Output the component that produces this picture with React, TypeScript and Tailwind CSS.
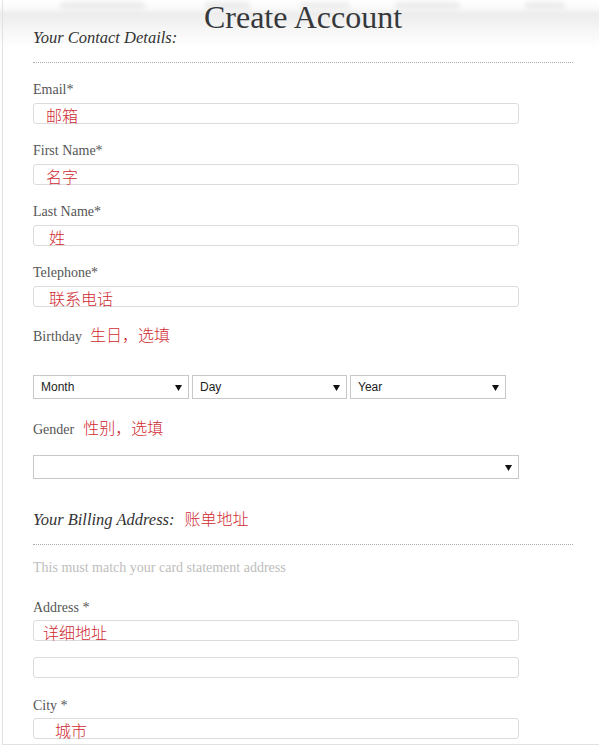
const RED = 'text-[#d02a31]';

function TextField({ label, note, noteLeft }: { label: string; note?: string; noteLeft?: string }) {
  return (
    <div className="mb-[19px]">
      <div className="h-[16px] leading-[16px] text-[14px] text-[#555] mb-[5px]">{label}</div>
      <div className="relative h-[21px] w-[486px] rounded-[3px] border border-[#dcdcdc] bg-white">
        {note && (
          <span
            className={`absolute top-[3px] ${noteLeft} ${RED} text-[16px] leading-[16px] font-['Noto_Sans_CJK_SC',sans-serif] font-light whitespace-nowrap`}
          >
            {note}
          </span>
        )}
      </div>
    </div>
  );
}

function FakeSelect({ label, width }: { label?: string; width: string }) {
  return (
    <div className={`${width} h-[24px] border border-[#c8c8c8] bg-white flex items-center justify-between pl-[7px] pr-[6px]`}>
      <span className="text-[12px] text-[#222] font-['Liberation_Sans',Arial,sans-serif]">{label}</span>
      <svg width="7" height="7" viewBox="0 0 7 7" className="ml-auto">
        <path d="M0 1h7L3.5 7z" fill="#111" />
      </svg>
    </div>
  );
}

export default function App() {
  return (
    <div className="relative w-[599px] h-[746px] overflow-hidden bg-white font-['Liberation_Serif','Times_New_Roman',serif]">
      {/* faded banner behind the title */}
      <div className="pointer-events-none absolute inset-x-0 top-0 h-[48px] bg-[linear-gradient(to_bottom,#ffffff_0px,#fafafa_8px,#ededed_14px,#f6f6f6_30px,#ffffff_48px)] overflow-hidden">
        <div className="absolute top-[2px] left-[60px] h-[8px] w-[85px] rounded-full bg-[#ececec] blur-[2px]" />
        <div className="absolute top-[2px] left-[205px] h-[8px] w-[45px] rounded-full bg-[#ececec] blur-[2px]" />
        <div className="absolute top-[2px] left-[300px] h-[8px] w-[50px] rounded-full bg-[#eeeeee] blur-[2px]" />
        <div className="absolute top-[2px] left-[395px] h-[8px] w-[65px] rounded-full bg-[#ececec] blur-[2px]" />
        <div className="absolute top-[2px] left-[525px] h-[8px] w-[40px] rounded-full bg-[#ececec] blur-[2px]" />
      </div>

      <div className="relative ml-[2px] h-[745px] border-l border-b border-[#e2e2e2] pl-[30px] pr-[26px]">
        <h1 className="h-[28px] pt-[1px] text-center text-[32px] leading-[32px] text-[#36383c] font-normal whitespace-nowrap">
          Create Account
        </h1>
        <div className="h-[20px] leading-[20px] text-[16.5px] italic text-[#333]">Your Contact Details:</div>
        <div className="mt-[14px] mb-[19px] border-t border-dotted border-[#a9a9a9]" />

        <TextField label="Email*" note="邮箱" noteLeft="left-[12px]" />
        <TextField label="First Name*" note="名字" noteLeft="left-[12px]" />
        <TextField label="Last Name*" note="姓" noteLeft="left-[15px]" />
        <TextField label="Telephone*" note="联系电话" noteLeft="left-[15px]" />

        <div className="mt-[1px] flex items-baseline h-[16px] leading-[16px]">
          <span className="text-[14px] text-[#555]">Birthday</span>
          <span className={`ml-[8px] ${RED} text-[16px] font-['Noto_Sans_CJK_SC',sans-serif] font-light`}>生日，选填</span>
        </div>
        <div className="mt-[33px] flex gap-[3px]">
          <FakeSelect label="Month" width="w-[156px]" />
          <FakeSelect label="Day" width="w-[155px]" />
          <FakeSelect label="Year" width="w-[156px]" />
        </div>

        <div className="mt-[20px] flex items-baseline h-[16px] leading-[16px]">
          <span className="text-[14px] text-[#555]">Gender</span>
          <span className={`ml-[9px] ${RED} text-[16px] font-['Noto_Sans_CJK_SC',sans-serif] font-light`}>性别，选填</span>
        </div>
        <div className="mt-[20px]">
          <FakeSelect width="w-[486px]" />
        </div>

        <div className="mt-[29px] flex items-baseline h-[20px] leading-[20px]">
          <span className="text-[16.5px] italic text-[#333]">Your Billing Address:</span>
          <span className={`ml-[10px] ${RED} text-[16px] font-['Noto_Sans_CJK_SC',sans-serif] font-light`}>账单地址</span>
        </div>
        <div className="mt-[16px] mb-[15px] border-t border-dotted border-[#a9a9a9]" />
        <div className="h-[16px] leading-[16px] text-[14px] text-[#bdbdbd] mb-[24px]">
          This must match your card statement address
        </div>

        <div className="h-[16px] leading-[16px] text-[14px] text-[#555] mb-[4px]">Address *</div>
        <div className="relative h-[21px] w-[486px] rounded-[3px] border border-[#dcdcdc]">
          <span className={`absolute top-[3px] left-[9px] ${RED} text-[16px] leading-[16px] font-['Noto_Sans_CJK_SC',sans-serif] font-light`}>
            详细地址
          </span>
        </div>
        <div className="mt-[16px] mb-[20px] h-[21px] w-[486px] rounded-[3px] border border-[#dcdcdc]" />

        <div className="h-[16px] leading-[16px] text-[14px] text-[#555] mb-[4px]">City *</div>
        <div className="relative h-[21px] w-[486px] rounded-[3px] border border-[#dcdcdc]">
          <span className={`absolute top-[3px] left-[21px] ${RED} text-[16px] leading-[16px] font-['Noto_Sans_CJK_SC',sans-serif] font-light`}>
            城市
          </span>
        </div>
      </div>
    </div>
  );
}
